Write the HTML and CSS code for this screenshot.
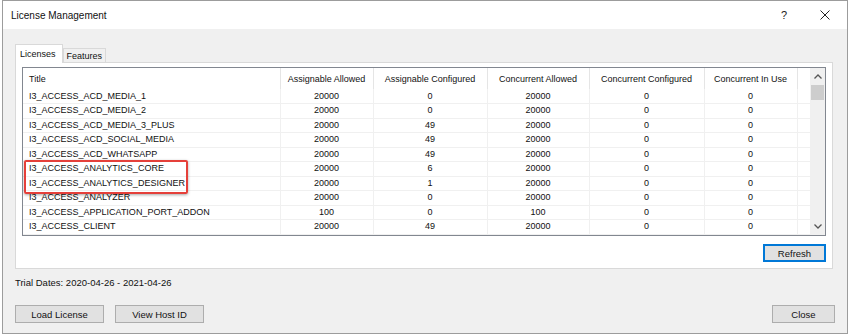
FILE: index.html
```html
<!DOCTYPE html>
<html lang="en">
<head>
  <meta charset="UTF-8">
  <title>License Management</title>
  <link rel="stylesheet" href="styles.css">
</head>
<body>
  <div class="window">
    <div class="titlebar">
      <span class="title">License Management</span>
      <span class="title-btn help">?</span>
      <span class="title-btn close-x">
        <svg viewBox="0 0 10 10" width="10" height="10"><path d="M0.5 0.5L9.5 9.5M9.5 0.5L0.5 9.5" stroke="#222" stroke-width="1" fill="none"/></svg>
      </span>
    </div>

    <div class="content">
      <div class="tabs">
        <div class="tab active">Licenses</div>
        <div class="tab">Features</div>
      </div>

      <div class="pane">
        <div class="list">
          <div class="grid-wrap">
            <table class="grid">
              <colgroup>
                <col class="c-title">
                <col class="c-aa">
                <col class="c-ac">
                <col class="c-ca">
                <col class="c-cc">
                <col class="c-ciu">
                <col class="c-fill">
              </colgroup>
              <thead>
                <tr>
                  <th class="left">Title</th>
                  <th>Assignable Allowed</th>
                  <th>Assignable Configured</th>
                  <th>Concurrent Allowed</th>
                  <th>Concurrent Configured</th>
                  <th>Concurrent In Use</th>
                  <th class="fill"></th>
                </tr>
              </thead>
              <tbody id="rows"></tbody>
            </table>
            <div class="highlight"></div>
          </div>
          <div class="scrollbar">
            <div class="arrow">
              <svg viewBox="0 0 8 5" width="8" height="5"><path d="M0.5 4.5L4 1L7.5 4.5" stroke="#555" stroke-width="1.3" fill="none"/></svg>
            </div>
            <div class="thumb"></div>
            <div class="track"></div>
            <div class="arrow">
              <svg viewBox="0 0 8 5" width="8" height="5"><path d="M0.5 0.5L4 4L7.5 0.5" stroke="#555" stroke-width="1.3" fill="none"/></svg>
            </div>
          </div>
        </div>
        <div class="pane-actions">
          <button class="btn btn-focus">Refresh</button>
        </div>
      </div>

      <div class="trial">Trial Dates: 2020-04-26 - 2021-04-26</div>

      <div class="footer">
        <button class="btn btn-wide">Load License</button>
        <button class="btn btn-wide">View Host ID</button>
        <button class="btn btn-close">Close</button>
      </div>
    </div>
  </div>

  <script>
    // license rows: title, assignable allowed, assignable configured, concurrent allowed, configured, in use
    const licenses = [
      ['I3_ACCESS_ACD_MEDIA_1', 20000, 0, 20000, 0, 0],
      ['I3_ACCESS_ACD_MEDIA_2', 20000, 0, 20000, 0, 0],
      ['I3_ACCESS_ACD_MEDIA_3_PLUS', 20000, 49, 20000, 0, 0],
      ['I3_ACCESS_ACD_SOCIAL_MEDIA', 20000, 49, 20000, 0, 0],
      ['I3_ACCESS_ACD_WHATSAPP', 20000, 49, 20000, 0, 0],
      ['I3_ACCESS_ANALYTICS_CORE', 20000, 6, 20000, 0, 0],
      ['I3_ACCESS_ANALYTICS_DESIGNER', 20000, 1, 20000, 0, 0],
      ['I3_ACCESS_ANALYZER', 20000, 0, 20000, 0, 0],
      ['I3_ACCESS_APPLICATION_PORT_ADDON', 100, 0, 100, 0, 0],
      ['I3_ACCESS_CLIENT', 20000, 49, 20000, 0, 0]
    ];

    const tbody = document.getElementById('rows');
    licenses.forEach(row => {
      const tr = document.createElement('tr');
      row.forEach((value, i) => {
        const td = document.createElement('td');
        td.textContent = value;
        if (i === 0) td.className = 'left';
        tr.appendChild(td);
      });
      const filler = document.createElement('td');
      filler.className = 'fill';
      tr.appendChild(filler);
      tbody.appendChild(tr);
    });
  </script>
</body>
</html>
```

FILE: styles.css
```css
:root {
  --window-bg: #f0f0f0;
  --window-border: #9c9c9c;
  --text: #111;
  --tab-border: #d9d9d9;
  --grid-line: #f0f0f0;
  --header-line: #e5e5e5;
  --btn-bg: #e1e1e1;
  --btn-border: #adadad;
  --focus: #0078d7;
  --marker: #e5403a;
}

* {
  box-sizing: border-box;
}

body {
  margin: 0;
  background-color: #fff;
  font-family: "Liberation Sans", Arial, sans-serif;
  color: var(--text);
}

.window {
  width: 846px;
  height: 334px;
  margin-left: 2px;
  border: 1px solid var(--window-border);
  display: flex;
  flex-direction: column;
  background-color: var(--window-bg);
}

.titlebar {
  height: 28px;
  display: flex;
  align-items: center;
  background-color: #fff;
  padding-left: 8px;
  font-size: 10px;
}

.title {
  flex: 1;
}

.title-btn {
  width: 40px;
  display: flex;
  justify-content: center;
  align-items: center;
  font-size: 11px;
  color: #222;
}

.help {
  margin-right: 1px;
}

.close-x {
  margin-right: 2px;
}

.content {
  flex: 1;
  display: flex;
  flex-direction: column;
  padding: 15px 12px 0 12px;
}

.tabs {
  display: flex;
  align-items: flex-end;
  height: 18px;
  font-size: 9px;
}

.tab {
  height: 14px;
  padding: 0 3px;
  border: 1px solid var(--tab-border);
  border-bottom: none;
  background-color: var(--window-bg);
  display: flex;
  align-items: center;
}

.tab.active {
  height: 19px;
  background-color: #fff;
  padding: 0 6px 0 4px;
  position: relative;
  z-index: 1;
  margin-bottom: -1px;
}

.pane {
  width: 818px;
  height: 207px;
  background-color: #fff;
  border: 1px solid var(--tab-border);
  padding: 4px 6px 0 6px;
  display: flex;
  flex-direction: column;
}

.list {
  height: 169px;
  border: 1px solid #828790;
  display: flex;
}

.grid-wrap {
  position: relative;
  width: 787px;
  overflow: hidden;
}

.grid {
  border-collapse: collapse;
  table-layout: fixed;
  width: 787px;
  font-size: 9px;
}

.c-title { width: 257px; }
.c-aa { width: 93px; }
.c-ac { width: 114px; }
.c-ca { width: 102px; }
.c-cc { width: 115px; }
.c-ciu { width: 93px; }
.c-fill { width: 13px; }

.grid th {
  height: 21px;
  font-weight: normal;
  text-align: center;
  border-right: 1px solid var(--header-line);
  padding: 0 4px;
  white-space: nowrap;
}

.grid th.fill {
  border-right: none;
}

.grid td {
  height: 14.5px;
  padding: 0 4px;
  text-align: center;
  border-bottom: 1px solid var(--grid-line);
  border-right: 1px solid var(--grid-line);
  white-space: nowrap;
  line-height: 13px;
}

.grid td.fill {
  border-right: none;
}

.grid .left {
  text-align: left;
  padding-left: 6px;
}

.highlight {
  position: absolute;
  left: 1px;
  top: 92px;
  width: 164px;
  height: 34px;
  border: 2px solid var(--marker);
  border-radius: 2px;
  box-shadow: 0 1px 3px rgba(0, 0, 0, 0.35);
}

.scrollbar {
  width: 15px;
  display: flex;
  flex-direction: column;
  background-color: #f0f0f0;
}

.scrollbar .arrow {
  height: 17px;
  display: flex;
  align-items: center;
  justify-content: center;
}

.thumb {
  height: 15px;
  margin: 0 1px;
  background-color: #cdcdcd;
}

.track {
  flex: 1;
}

.pane-actions {
  display: flex;
  justify-content: flex-end;
  padding-top: 8px;
}

.btn {
  height: 18px;
  padding: 0;
  font-family: "Liberation Sans", Arial, sans-serif;
  font-size: 9.5px;
  color: var(--text);
  background-color: var(--btn-bg);
  border: 1px solid var(--btn-border);
}

.btn-focus {
  width: 63px;
  border: 2px solid var(--focus);
}

.trial {
  font-size: 9.5px;
  margin-top: 8px;
  height: 12px;
}

.footer {
  display: flex;
  gap: 11px;
  margin-top: 16px;
}

.btn-wide {
  width: 89px;
}

.btn-close {
  width: 63px;
  margin-left: auto;
}
```
